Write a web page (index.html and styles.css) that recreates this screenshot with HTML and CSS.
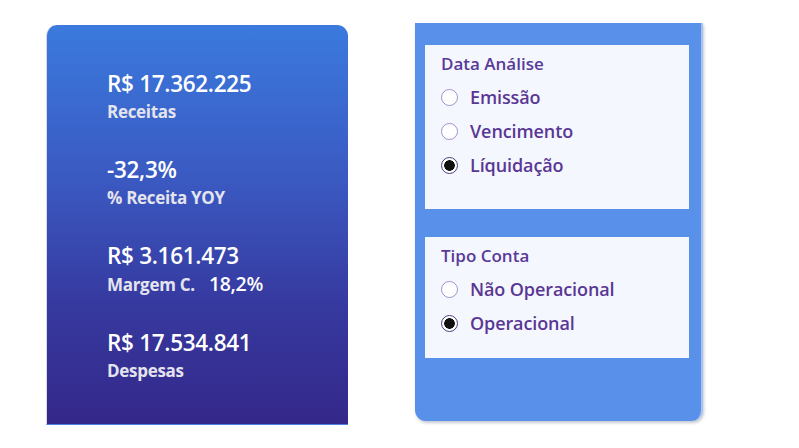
FILE: index.html
```html
<!DOCTYPE html>
<html lang="pt-BR">
<head>
<meta charset="utf-8">
<title>Painel</title>
<link rel="stylesheet" href="styles.css">
</head>
<body>
<div class="page">
  <section class="kpi-card">
    <div class="kpi">
      <div class="kpi-value">R$ 17.362.225</div>
      <div class="kpi-label">Receitas</div>
    </div>
    <div class="kpi">
      <div class="kpi-value">-32,3%</div>
      <div class="kpi-label">% Receita YOY</div>
    </div>
    <div class="kpi">
      <div class="kpi-value">R$ 3.161.473</div>
      <div class="kpi-label">Margem C. <span class="kpi-extra">18,2%</span></div>
    </div>
    <div class="kpi">
      <div class="kpi-value">R$ 17.534.841</div>
      <div class="kpi-label">Despesas</div>
    </div>
  </section>

  <section class="filter-panel">
    <div class="slicer slicer-date">
      <div class="slicer-title">Data Análise</div>
      <div class="option"><span class="radio"></span><span class="option-text">Emissão</span></div>
      <div class="option"><span class="radio"></span><span class="option-text">Vencimento</span></div>
      <div class="option"><span class="radio checked"></span><span class="option-text">Líquidação</span></div>
    </div>
    <div class="slicer slicer-type">
      <div class="slicer-title">Tipo Conta</div>
      <div class="option"><span class="radio"></span><span class="option-text">Não Operacional</span></div>
      <div class="option"><span class="radio checked"></span><span class="option-text">Operacional</span></div>
    </div>
  </section>
</div>
</body>
</html>
```

FILE: styles.css
```css
html, body {
  margin: 0;
  padding: 0;
  background: #ffffff;
}

.page {
  display: flex;
  align-items: flex-start;
  width: 799px;
  height: 448px;
  overflow: hidden;
}

.kpi-card {
  box-sizing: border-box;
  width: 302px;
  height: 400px;
  margin-left: 46px;
  margin-top: 25px;
  padding: 46px 0 0 60px;
  border-radius: 11px 11px 0 0;
  background: linear-gradient(180deg, #3b7ade 0%, #3a58c0 40%, #36399f 70%, #35288a 100%);
  border-left: 1px solid #d6dae6;
  border-bottom: 1px solid #4f7fe0;
  display: flex;
  flex-direction: column;
  gap: 35px;
  font-family: "Open Sans", "Noto Sans", sans-serif;
}

.kpi {
  display: flex;
  flex-direction: column;
  gap: 5px;
}

.kpi-value {
  font-size: 22.5px;
  line-height: 26px;
  font-weight: 600;
  color: #ffffff;
  letter-spacing: -0.3px;
}

.kpi-label {
  font-size: 17px;
  line-height: 20px;
  font-weight: 700;
  color: #e4e4ef;
  letter-spacing: -0.3px;
}

.kpi-extra {
  font-size: 19.5px;
  font-weight: 600;
  color: #ffffff;
  margin-left: 10px;
  letter-spacing: -0.3px;
}

.filter-panel {
  box-sizing: border-box;
  width: 288px;
  height: 398px;
  margin-left: 67px;
  margin-top: 23px;
  padding: 22px 12px 0 10px;
  background: #5890ea;
  border-radius: 0 0 11px 11px;
  box-shadow: 1px 2px 3px rgba(90, 100, 130, 0.35);
  border-right: 2px solid #a9c3f0;
  display: flex;
  flex-direction: column;
  gap: 28px;
  font-family: "Open Sans", "Noto Sans", sans-serif;
}

.slicer {
  box-sizing: border-box;
  background: #f4f7fe;
  padding: 8px 0 0 16px;
}

.slicer-date {
  height: 164px;
}

.slicer-type {
  height: 121px;
}

.slicer-title {
  font-size: 17px;
  line-height: 22px;
  font-weight: 600;
  color: #5a3a98;
  margin-bottom: 5px;
}

.option {
  display: flex;
  align-items: center;
  gap: 12px;
  height: 34px;
}

.option-text {
  font-size: 18px;
  line-height: 34px;
  font-weight: 600;
  color: #5a3794;
  letter-spacing: -0.1px;
}

.radio {
  box-sizing: border-box;
  width: 17px;
  height: 17px;
  border-radius: 50%;
  border: 1.5px solid #9f90cc;
  background: #ffffff;
  flex: none;
}

.radio.checked {
  border: 1.5px solid #4b3d80;
  background: radial-gradient(circle, #111111 0 5px, #ffffff 5.6px);
}
```
